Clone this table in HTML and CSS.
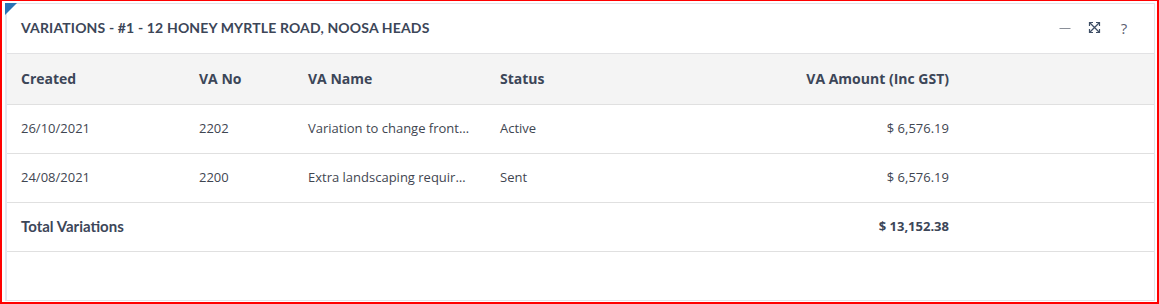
FILE: index.html
```html
<!DOCTYPE html>
<html>
<head>
<meta charset="utf-8">
<link rel="stylesheet" href="styles.css">
</head>
<body>
<div class="frame">
  <section class="panel">
    <span class="corner"></span>
    <header class="panel-head">
      <h2 class="title">VARIATIONS - #1 - 12 HONEY MYRTLE ROAD, NOOSA HEADS</h2>
      <div class="tools">
        <svg class="ico" width="12" height="12" viewBox="0 0 12 12"><path d="M0.5 6.5h11" stroke="#8a8f98" stroke-width="1"/></svg>
        <svg class="ico" width="13" height="13" viewBox="0 0 13 13" fill="none" stroke="#3f4f66" stroke-width="1.3"><path d="M2 2l9 9M11 2l-9 9"/><path d="M1.5 5V1.5H5M8 1.5h3.5V5M11.5 8v3.5H8M5 11.5H1.5V8" stroke-width="1.2"/></svg>
        <span class="help">?</span>
      </div>
    </header>
    <div class="table">
      <div class="row head">
        <div class="c c1">Created</div>
        <div class="c c2">VA No</div>
        <div class="c c3">VA Name</div>
        <div class="c c4">Status</div>
        <div class="c c5">VA Amount (Inc GST)</div>
        <div class="c c6"></div>
      </div>
      <div class="row">
        <div class="c c1">26/10/2021</div>
        <div class="c c2">2202</div>
        <div class="c c3">Variation to change front…</div>
        <div class="c c4">Active</div>
        <div class="c c5">$ 6,576.19</div>
        <div class="c c6"></div>
      </div>
      <div class="row">
        <div class="c c1">24/08/2021</div>
        <div class="c c2">2200</div>
        <div class="c c3">Extra landscaping requir…</div>
        <div class="c c4">Sent</div>
        <div class="c c5">$ 6,576.19</div>
        <div class="c c6"></div>
      </div>
      <div class="row total">
        <div class="c c1 tl">Total Variations</div>
        <div class="c c2"></div>
        <div class="c c3"></div>
        <div class="c c4"></div>
        <div class="c c5">$ 13,152.38</div>
        <div class="c c6"></div>
      </div>
    </div>
  </section>
</div>
</body>
</html>
```
FILE: styles.css
```css
html, body {
  margin: 0;
  padding: 0;
  background: #fff;
}
.frame {
  width: 1159px;
  height: 304px;
  box-sizing: border-box;
  border: 2px solid #ff0000;
  border-top-width: 1px;
  padding: 2px 2px 1px 3px;
}
.panel {
  position: relative;
  height: 100%;
  box-sizing: border-box;
  border: 1px solid #e2e3e8;
  border-left: 2px solid #e4e6ee;
  background: #fff;
  font-family: "Open Sans", "Noto Sans", sans-serif;
  color: #3f4651;
}
.corner {
  position: absolute;
  left: -2px;
  top: -1px;
  width: 0;
  height: 0;
  border-top: 12px solid #2a73b6;
  border-right: 12px solid transparent;
}
.panel-head {
  display: flex;
  align-items: center;
  justify-content: space-between;
  padding: 0 24px 2px 14px;
  box-sizing: border-box;
  height: 50px;
  border-bottom: 1px solid #e2e2e4;
}
.title {
  margin: 0;
  font-family: "Lato", "Noto Sans", sans-serif;
  font-weight: 700;
  font-size: 14px;
  letter-spacing: 0.15px;
  color: #3c4658;
}
.tools {
  display: flex;
  align-items: center;
  gap: 17px;
}
.help {
  font-family: "Open Sans", sans-serif;
  font-size: 15px;
  color: #5a6070;
  width: 12px;
  text-align: center;
}
.table {
  font-size: 13px;
}
.row {
  display: flex;
  align-items: center;
  border-bottom: 1px solid #e0e0e0;
  padding-bottom: 2px;
  box-sizing: content-box;
  height: 46px;
}
.row.head {
  height: 48px;
  background: #f4f4f4;
  font-weight: 700;
  font-size: 14px;
  color: #3c4658;
}
.c {
  box-sizing: border-box;
  padding: 0 15px;
  white-space: nowrap;
}
.c1 { width: 177px; padding-left: 14px; }
.c2 { width: 109px; }
.c3 { width: 192px; }
.c4 { width: 150px; }
.c5 { width: 329px; text-align: right; }
.c6 { flex: 1; }
.row.total {
  font-weight: 700;
  color: #3c4658;
}
.tl {
  font-family: "Lato", "Noto Sans", sans-serif;
  font-size: 15px;
}
```
